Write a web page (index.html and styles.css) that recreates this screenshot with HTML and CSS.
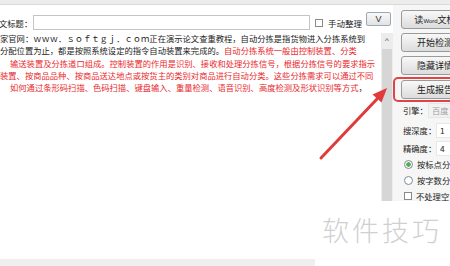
FILE: index.html
```html
<!doctype html>
<html>
<head>
    <meta charset="utf-8">
    <title>论文查重</title>
    <link rel="stylesheet" href="styles.css">
</head>
<body>
    <div class="window">
        <div class="top-strip"></div>
        <div class="app">
            <div class="main">
                <div class="title-row">
                    <span class="label">文标题：</span>
                    <input class="title-input" type="text">
                    <span class="check"></span>
                    <span class="check-label">手动整理</span>
                    <button class="v-button">V</button>
                </div>
                <div class="editor">
                    <div class="editor-text">
                        <div class="line">家官网：ｗｗｗ．ｓｏｆｔｇｊ．ｃｏｍ正在演示论文查重教程，自动分拣是指货物进入分拣系统到</div>
                        <div class="line">分配位置为止，都是按照系统设定的指令自动装置来完成的。<span class="red">自动分拣系统一般由控制装置、分类</span></div>
                        <div class="line red indent">输送装置及分拣道口组成。控制装置的作用是识别、接收和处理分拣信号，根据分拣信号的要求指示</div>
                        <div class="line red">装置、按商品品种、按商品送达地点或按货主的类别对商品进行自动分类。这些分拣需求可以通过不同</div>
                        <div class="line red indent">如何通过条形码扫描、色码扫描、键盘输入、重量检测、语音识别、高度检测及形状识别等方式<span class="dark">，</span></div>
                    </div>
                    <div class="scrollbar">
                        <div class="scroll-up">^</div>
                        <div class="scroll-thumb"></div>
                    </div>
                </div>
            </div>
            <div class="side">
                <button class="side-button">读<small>Word</small>文档</button>
                <button class="side-button">开始检测</button>
                <button class="side-button">隐藏详情</button>
                <div class="highlight">
                    <button class="side-button">生成报告</button>
                </div>
                <div class="option engine">
                    <span class="opt-label">引擎：</span>
                    <span class="combo">百度</span>
                </div>
                <div class="option depth">
                    <span class="opt-label">搜深度：</span>
                    <span class="field">1</span>
                </div>
                <div class="option">
                    <span class="opt-label">精确度：</span>
                    <span class="field">4</span>
                </div>
                <div class="option">
                    <span class="radio checked"></span>
                    <span>按标点分句</span>
                </div>
                <div class="option">
                    <span class="radio"></span>
                    <span>按字数分句</span>
                </div>
                <div class="option">
                    <span class="check"></span>
                    <span>不处理空白</span>
                </div>
            </div>
        </div>
        <div class="blank"></div>
        <div class="bottom-strip"></div>

        <div class="watermark">软件技巧</div>
        <svg class="arrow" width="450" height="266" viewBox="0 0 450 266">
            <line x1="321" y1="158" x2="377" y2="99" stroke="#e03a3a" stroke-width="3" stroke-linecap="round"/>
            <polygon points="387,88 381.5,102.5 372.5,94.5" fill="#e03a3a"/>
        </svg>
    </div>
</body>
</html>
```

FILE: styles.css
```css
body {
    margin: 0;
    padding: 0;
    background-color: white;
    font-family: "Noto Sans CJK SC", "Liberation Sans", sans-serif;
    color: #222;
}
.window {
    position: relative;
    width: 450px;
    height: 266px;
    overflow: hidden;
}
.top-strip {
    height: 4px;
    background-color: #ececec;
    border-bottom: 1px solid #dadada;
}
.app {
    display: flex;
    height: 196px;
    overflow: hidden;
}
.main {
    width: 393px;
    flex-shrink: 0;
    display: flex;
    flex-direction: column;
}
.title-row {
    display: flex;
    align-items: center;
    height: 28px;
    box-sizing: border-box;
    padding-top: 7px;
    font-size: 8.3px;
}
.label {
    margin-left: -1px;
    width: 34px;
    white-space: nowrap;
}
.title-input {
    width: 277px;
    height: 15px;
    box-sizing: border-box;
    margin: 0;
    border: 1px solid #c4c4c4;
    background-color: white;
}
.check {
    display: inline-block;
    width: 8px;
    height: 8px;
    box-sizing: border-box;
    border: 1px solid #8a8a8a;
    background-color: white;
    margin-left: 5px;
}
.check-label {
    margin-left: 5px;
    font-size: 8.5px;
    white-space: nowrap;
}
.v-button {
    margin: -7px 0 0 4px;
    width: 25px;
    height: 14px;
    padding: 0;
    border: 1px solid #9aa7b4;
    border-radius: 2px;
    background: linear-gradient(#f8f8f8, #e2e2e2);
    font-family: "Liberation Sans", sans-serif;
    font-size: 9px;
    color: #333;
}
.editor {
    flex: 1;
    display: flex;
}
.editor-text {
    width: 381px;
    margin-top: -1px;
    font-size: 8.3px;
    line-height: 12.3px;
    overflow: hidden;
}
.line {
    white-space: nowrap;
}
.indent {
    padding-left: 10px;
}
.red {
    color: #e8282c;
}
.dark {
    color: #222;
}
.scrollbar {
    width: 12px;
    display: flex;
    flex-direction: column;
    background-color: #ececec;
}
.scroll-up {
    height: 14px;
    text-align: center;
    font-family: "Liberation Sans", sans-serif;
    font-size: 8px;
    line-height: 16px;
    color: #444;
}
.scroll-thumb {
    flex: 1;
    margin: 2px 1px 0 1px;
    background-color: #d6d6d6;
}
.side {
    width: 90px;
    flex-shrink: 0;
    box-sizing: border-box;
    padding: 5px 0 0 8px;
    background-color: #f6f6f6;
    display: flex;
    flex-direction: column;
    font-size: 8.3px;
}
.side-button {
    width: 68px;
    height: 19px;
    margin: 0 0 4px 0;
    padding: 0;
    flex-shrink: 0;
    border: 1px solid #9a9a9a;
    border-radius: 3px;
    background: linear-gradient(#f8f8f8, #dcdcdc);
    font-family: "Noto Sans CJK SC", sans-serif;
    font-size: 9px;
    color: #222;
}
.side-button small {
    font-family: "Liberation Sans", sans-serif;
    font-size: 6px;
}
.highlight {
    margin: -2px 0 0 -8px;
    padding: 1px 0 1px 6px;
    border: 2px solid #e04545;
    border-radius: 5px;
    height: 19px;
    flex-shrink: 0;
}
.highlight .side-button {
    margin: 0;
}
.option {
    display: flex;
    align-items: center;
    height: 16px;
    flex-shrink: 0;
    padding-left: 2px;
    white-space: nowrap;
}
.option .check {
    margin-left: 1px;
    margin-right: 4px;
}
.engine {
    margin-top: 0;
}
.depth {
    margin-top: 4px;
    margin-bottom: 2px;
}
.opt-label {
    width: 33px;
}
.combo {
    margin-left: -8px;
    padding: 0 3px;
    height: 13px;
    line-height: 13px;
    color: #a0a0a0;
    border: 1px solid #e6e6e6;
    background-color: #f2f2f2;
    width: 40px;
}
.field {
    padding-left: 3px;
    height: 13px;
    line-height: 13px;
    width: 40px;
    border: 1px solid #e8e8e8;
    background-color: white;
}
.radio {
    display: inline-block;
    width: 9px;
    height: 9px;
    box-sizing: border-box;
    border: 1px solid #7f8a94;
    border-radius: 50%;
    background-color: white;
    margin: 0 4px 0 1px;
}
.radio.checked {
    background: radial-gradient(circle, #4caf50 0, #4caf50 2px, white 2.5px);
}
.blank {
    height: 58px;
}
.bottom-strip {
    width: 315px;
    height: 7px;
    background-color: #efefef;
}
.watermark {
    position: absolute;
    left: 322px;
    top: 212px;
    font-size: 27px;
    font-weight: 300;
    letter-spacing: 3px;
    line-height: 36px;
    color: #d0d0d0;
    white-space: nowrap;
}
.arrow {
    position: absolute;
    left: 0;
    top: 0;
    pointer-events: none;
}
```
